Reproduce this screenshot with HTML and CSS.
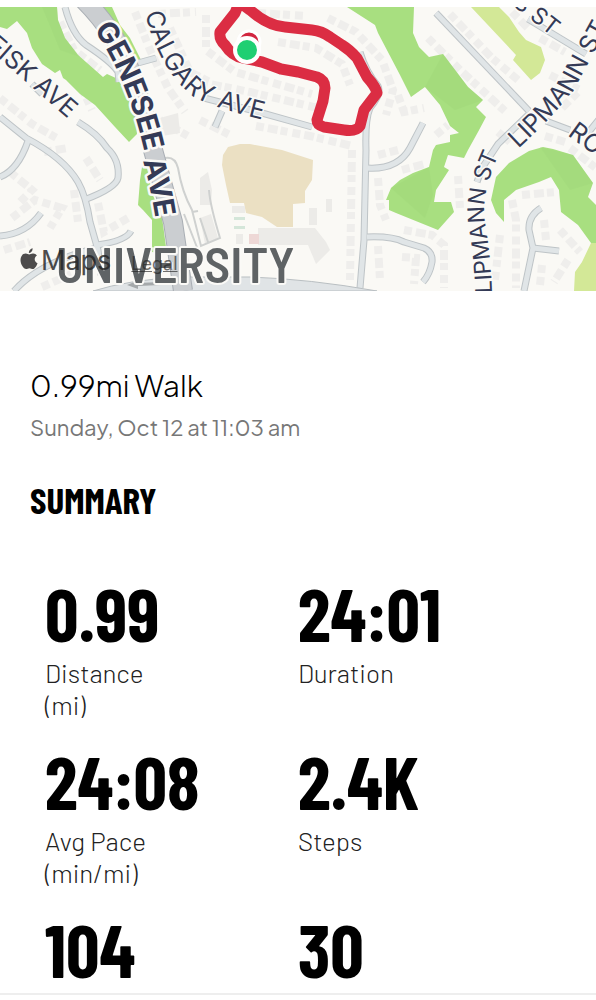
FILE: index.html
```html
<!DOCTYPE html>
<html lang="en">
<head>
<meta charset="utf-8">
<meta name="viewport" content="width=device-width, initial-scale=1">
<title>0.99mi Walk</title>
<link rel="stylesheet" href="styles.css">
</head>
<body>
<main class="workout">
  <section class="map" aria-label="Route map">
    <svg class="map-canvas" viewBox="0 7 596 284" preserveAspectRatio="xMidYMid slice">
      <defs>
        <path id="p-genesee" d="M94,29 Q130,84 146,158"/>
        <path id="p-genesee-ave" d="M143,161 Q151,188 156,222"/>
        <path id="p-calgary" d="M145,13 Q158,66 190,94 Q208,108 290,126"/>
        <path id="p-fisk" d="M-14,47 L90,138"/>
        <path id="p-lip-east" d="M518,149 Q558,112 576,86 Q590,60 612,20"/>
        <path id="p-lip-south" d="M492,293 Q491,258 485,222 Q480,190 504,144"/>
        <path id="p-st" d="M512,5 L585,62"/>
        <path id="p-ros" d="M567,135 L615,170"/>
      </defs>
      <rect class="land" y="7" width="596" height="284"/>

      <g class="houses">
        <path d="M60,22 L74,50 L100,70"/>
        <path d="M135,12 L150,50 L168,88 L185,112"/>
        <path d="M158,14 L196,12"/>
        <path d="M170,28 L190,72 L212,83"/>
        <path d="M0,98 L32,124 L60,140"/>
        <path d="M76,75 L92,110"/>
        <path d="M160,120 L188,136"/>
        <path d="M206,15 L206,50 L235,72 L312,94"/>
        <path d="M200,82 L250,92 L318,108"/>
        <path d="M258,13 L305,16"/>
        <path d="M328,18 L356,32 L382,60 L393,90 L386,115"/>
        <path d="M278,42 L316,48 L342,64 L350,85"/>
        <path d="M200,120 L232,136"/>
        <path d="M256,126 L310,136 L352,146"/>
        <path d="M10,172 L32,190 L20,202"/>
        <path d="M44,152 L68,148"/>
        <path d="M12,218 L35,200 L62,208 L50,228"/>
        <path d="M4,250 L30,242"/>
        <path d="M74,190 L78,222"/>
        <path d="M86,158 L100,180"/>
        <path d="M98,203 L104,232 L128,218"/>
        <path d="M42,287 L76,272"/>
        <path d="M352,150 L350,280"/>
        <path d="M378,178 L380,205 L386,220"/>
        <path d="M378,246 L380,280"/>
        <path d="M378,155 L398,150"/>
        <path d="M402,170 L425,164"/>
        <path d="M404,230 L432,235 L444,245 L444,288"/>
        <path d="M402,257 L416,258 L414,284"/>
        <path d="M428,38 L460,70 L506,112"/>
        <path d="M450,14 L492,58 L518,80"/>
        <path d="M512,12 L528,28"/>
        <path d="M540,38 L565,52"/>
        <path d="M398,95 L404,112 L424,108"/>
        <path d="M436,135 L448,125"/>
        <path d="M458,176 L460,208"/>
        <path d="M500,235 L495,280"/>
        <path d="M512,200 L516,220 L516,288"/>
        <path d="M522,195 L556,192"/>
        <path d="M544,220 L546,240 M542,265 L540,285"/>
        <path d="M560,230 L580,252 M568,260 L554,282"/>
        <path d="M570,148 L596,168"/>
        <path d="M550,75 L580,90 L560,110"/>
        <path d="M498,132 L510,142 M545,136 L565,142"/>
      </g>

      <g class="green">
        <path d="M0,7 H57 L58,20 65,38 78,55 103,77 107,74 118,79 126,93 136,118 137,134 129,142 115,127 95,105 80,94 66,80 63,78 60,70 55,73 42,64 32,48 27,33 17,21 7,29 0,27Z"/>
        <path d="M102,7 H112 L120,25 130,38 142,62 137,62 120,36Z"/>
        <path d="M142,167 L147,167 152,193 162,217 166,247 160,253 152,252 152,220 143,210 138,205 139,193 140,180Z"/>
        <path d="M347,7 H414 L413,33 419,47 429,57 443,54 468,87 483,100 476,107 486,117 478,132 468,150 464,158 448,155 444,167 449,170 436,190 434,202 451,202 454,212 438,230 396,213 389,210 389,200 386,200 391,188 400,180 413,173 429,167 433,150 436,145 450,142 450,135 459,133 450,126 440,105 425,87 411,97 400,75 378,33 375,25Z"/>
        <path d="M496,177 L509,163 529,151 543,147 553,149 573,155 593,183 588,197 596,205 V243 H591 L578,225 561,212 559,190 551,177 539,182 516,190 504,200 504,222 496,213 491,200Z"/>
      </g>
      <g class="green-shade">
        <path d="M42,7 H57 L58,20 65,38 80,57 60,50Z"/>
        <path d="M425,87 L443,54 468,87 483,100 455,110Z"/>
        <path d="M391,188 L429,167 433,195 425,218Z"/>
        <path d="M540,147 L573,155 593,183 570,190Z"/>
      </g>
      <g class="lime">
        <path d="M471,7 H499 L509,17 519,32 526,40 541,47 545,60 540,73 531,80 513,60 516,55Z"/>
        <path d="M591,243 H596 V291 H574 L575,272 582,262Z"/>
      </g>
      <path class="tan" d="M222,165 L223,155 228,147 240,144 250,144 282,150 313,160 312,180 305,191 305,203 293,204 293,227 277,227 262,217 246,213 244,203 230,203 226,185Z"/>
      <g class="campus">
        <path d="M232,206 h13 v7 h-13z M309,208 h8 v17 h-8z M326,199 h6 v13 h-6z M236,234 h7 v10 h-7z"/>
        <path d="M258,228 L315,228 326,242 330,250 316,264 308,245 258,245Z"/>
        <path d="M200,178 L208,172 212,190 211,205 200,205Z M200,218 L211,214 218,238 205,244Z"/>
        <path d="M160,118 L178,113 180,133 162,136Z"/>
      </g>
      <path class="court" d="M234,217 h11 v3 h-11z M234,226 h11 v3 h-11z"/>
      <path class="court-red" d="M249,234 h10 v10 h-10z"/>

      <g class="roads-edge">
        <use href="#roads"/>
      </g>
      <g class="roads-fill">
        <g id="roads">
          <path d="M65,7 Q72,34 86,45 Q112,62 118,72 L119,82"/>
          <path d="M32,84 L42,94"/>
          <path d="M78,122 Q98,134 107,148 Q120,160 118,178 Q116,188 84,200"/>
          <path d="M0,117 L26,138 Q64,158 78,182 Q86,196 90,222 L98,250 101,275"/>
          <path d="M28,141 Q18,170 0,177"/>
          <path d="M0,236 Q26,234 41,213"/>
          <path d="M97,245 Q126,241 131,231"/>
          <path d="M14,291 Q40,262 97,248"/>
          <path d="M138,63 L156,58"/>
          <path d="M204,98 L262,113 312,127"/>
          <path d="M222,111 L215,127"/>
          <path d="M360,52 Q366,72 378,86 Q382,94 370,108 Q365,120 366,150 L364,240 360,288"/>
          <path d="M367,168 Q398,170 410,148 L423,123"/>
          <path d="M367,237 Q392,236 404,242 L424,248 Q433,252 432,262 Q430,274 423,282"/>
          <path d="M436,13 L529,111"/>
          <path d="M528,19 L586,54"/>
          <path d="M546,121 L570,130 M588,133 L600,118"/>
          <path d="M529,114 L498,144 482,168 477,182"/>
          <path d="M541,208 Q528,216 529,230 L533,248 524,291"/>
          <path d="M533,248 L559,251"/>
        </g>
      </g>
      <path class="drive" d="M165,158 Q175,156 178,168 Q182,192 192,210 L201,246 220,238 Q210,205 209,190 M192,212 L198,211 M200,218 L208,242 M184,214 L198,250"/>
      <path class="avenue" d="M93,291 Q128,280 180,277 L250,277 Q310,279 377,291Z"/>
      <path class="boulevard-edge" d="M84,0 Q118,34 132,76 T153,150 L173,222 183,291"/>
      <path class="boulevard" d="M84,0 Q118,34 132,76 T153,150 L173,222 183,291"/>
      <path class="arrow" d="M127,285 L139,280 138,283 161,282 161,285 138,286 138,289Z"/>

      <path class="route" d="M239,3 L235,13 220,32 Q219,40 225,45 Q232,56 243,58 L262,62 281,69 298,72 317,77 Q325,80 325,88 L323,101 317,120 Q317,125 324,127 L344,130 Q356,132 360,126 L364,110 377,93 Q376,87 367,77 L357,58 Q350,50 342,45 L330,37 Q322,31 312,30 L285,27 Q268,26 250,10 L242,4Z"/>
      <circle class="finish" cx="249" cy="42" r="11"/>
      <circle class="start" cx="247" cy="50" r="12"/>

      <g class="street">
        <text><textPath href="#p-calgary">CALGARY AVE</textPath></text>
        <text><textPath href="#p-fisk">FISK AVE</textPath></text>
        <text><textPath href="#p-lip-east">LIPMANN ST</textPath></text>
        <text class="street-small"><textPath href="#p-lip-south">LIPMANN ST</textPath></text>
        <text class="street-small"><textPath href="#p-st">S ST</textPath></text>
        <text><textPath href="#p-ros">ROS</textPath></text>
      </g>
      <g class="street street-major">
        <text><textPath href="#p-genesee">GENESEE</textPath></text>
        <text><textPath href="#p-genesee-ave">AVE</textPath></text>
      </g>
      <text class="district" x="56" y="283">UNIVERSITY</text>
    </svg>
    <div class="attribution">
      <span class="brand">
        <svg class="apple" viewBox="0 0 18 22" aria-hidden="true"><path d="M12.6,0.3 C12.8,2.8 10.9,4.9 8.9,5 C8.6,2.8 10.6,0.6 12.6,0.3Z M9.2,6.5 C10.1,6.5 11.4,5.4 13.2,5.5 C14.7,5.6 16.1,6.2 16.9,7.5 C13.6,9.6 14.2,13.9 17.5,15.2 C16.7,17.6 14.9,21 12.9,21.1 C11.6,21.1 11.1,20.3 9.5,20.3 C7.9,20.3 7.3,21.1 6.1,21.1 C3.6,21.1 0.5,16.4 0.5,12.1 C0.5,7.8 3.1,5.6 5.7,5.6 C7.3,5.6 8.3,6.5 9.2,6.5Z"/></svg>Maps</span>
      <a class="legal" href="#legal">Legal</a>
    </div>
  </section>

  <header class="heading">
    <h1 class="title">0.99mi Walk</h1>
    <p class="date">Sunday, Oct 12 at 11:03 am</p>
  </header>

  <section class="summary">
    <h2 class="summary-title">SUMMARY</h2>
    <dl class="metrics">
      <div class="metric"><dd class="value">0.99</dd><dt class="label">Distance<br>(mi)</dt></div>
      <div class="metric"><dd class="value">24:01</dd><dt class="label">Duration</dt></div>
      <div class="metric"><dd class="value">24:08</dd><dt class="label">Avg Pace<br>(min/mi)</dt></div>
      <div class="metric"><dd class="value">2.4K</dd><dt class="label">Steps</dt></div>
      <div class="metric"><dd class="value">104</dd></div>
      <div class="metric"><dd class="value">30</dd></div>
    </dl>
  </section>
</main>
</body>
</html>
```
FILE: styles.css
```css
* { box-sizing: border-box; }
body { margin: 0; background: #fff; color: #000; font-family: "Plus Jakarta Sans", Inter, sans-serif; }
h1, h2, p, dl, dd { margin: 0; }

.workout { padding-top: 7px; border-bottom: 2px solid #eee; }

.map { position: relative; overflow: hidden; }
.map-canvas { display: block; width: 100%; height: 284px; }
.land { fill: #faf9f5; }
.houses path { fill: none; stroke: #efeeec; stroke-width: 8; stroke-dasharray: 8 4 10 3 7 5; }
.green { fill: #a8df80; }
.green-shade { fill: #9bd576; opacity: .3; }
.lime { fill: #d3e897; }
.tan { fill: #ebe0c3; }
.campus { fill: #ecebe8; }
.court { fill: #d4e6d9; }
.court-red { fill: #eed8d6; }
.roads-edge { fill: none; stroke: #bec4c7; stroke-width: 7; }
.roads-fill { fill: none; stroke: #e0e5e7; stroke-width: 5; }
.drive { fill: none; stroke: #cfd1d0; stroke-width: 2; }
.avenue { fill: #e0e4e6; stroke: #b9bfc2; }
.boulevard-edge { fill: none; stroke: #a9aeb4; stroke-width: 20; }
.boulevard { fill: none; stroke: #cbced1; stroke-width: 18; }
.arrow { fill: #a5a9ab; }
.route { fill: none; stroke: #db2d43; stroke-width: 11; stroke-linejoin: round; }
.finish { fill: #d22640; stroke: #fff; stroke-width: 3; }
.start { fill: #1fcf72; stroke: #fff; stroke-width: 4; }
.street { font-family: Inter, sans-serif; font-size: 25px; fill: #343a56; stroke: #fbfaf7; stroke-width: 3; stroke-linejoin: round; paint-order: stroke; }
.street-small { font-size: 23px; }
.street-major { font-size: 29px; font-weight: 700; stroke-width: 5; }
.district { font-family: "Barlow Semi Condensed", "Barlow", Roboto, sans-serif; font-size: 50px; font-weight: 600; fill: #5f6365; stroke: #fbfaf7; stroke-width: 4; stroke-linejoin: round; paint-order: stroke; }

.attribution { position: absolute; left: 20px; bottom: 12px; display: flex; align-items: baseline; gap: 20px; color: #222; font-family: Inter, sans-serif; opacity: .8; }
.brand { font-size: 27px; line-height: 36px; }
.apple { width: 18px; height: 22px; margin-right: 3px; fill: currentColor; }
.legal { color: inherit; font-size: 18px; opacity: .8; }

.heading { padding: 74px 30px 0; }
.title { font-size: 30px; line-height: 40px; font-weight: 300; }
.date { margin-top: 2px; font-size: 22px; line-height: 40px; font-weight: 400; color: #777; }

.summary-title, .value { font-family: "Barlow Condensed", "Liberation Sans Narrow", "Roboto Condensed", Roboto, sans-serif; font-weight: 700; }
.summary { padding: 30px 30px 0; }
.summary-title { font-size: 37px; line-height: 44px; }
.metrics { display: grid; grid-template-columns: 1fr 1fr; row-gap: 24px; padding: 56px 15px 8px; }
.metric { display: flex; flex-direction: column; }
.value { font-size: 74px; line-height: 72px; }
.label { margin-top: 8px; font-family: Barlow, Roboto, sans-serif; font-size: 26px; line-height: 32px; font-weight: 300; color: #222; }
```
